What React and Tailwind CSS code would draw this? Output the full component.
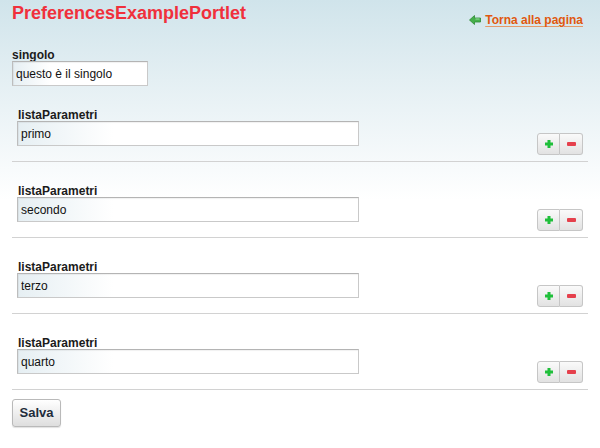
import React from 'react';

const rows = ['primo', 'secondo', 'terzo', 'quarto'];

const PlusIcon = () => (
  <svg width="8" height="8" viewBox="0 0 8 8">
    <path d="M2.5 0h3v2.5H8v3H5.5V8h-3V5.5H0v-3h2.5z" fill="#1fbf3a" />
  </svg>
);

const MinusIcon = () => (
  <svg width="9" height="4" viewBox="0 0 9 4">
    <rect x="0" y="0" width="9" height="4" rx="1" fill="#e5404c" />
  </svg>
);

const BackArrow = () => (
  <svg width="12" height="10" viewBox="0 0 12 10" className="mr-[4px]">
    <path d="M0.5 5L5.5 0.5V3H11.5V7H5.5V9.5Z" fill="#45b04a" stroke="#2f8a35" strokeWidth="0.8" strokeLinejoin="round" />
    <path d="M6.5 4H10.5" stroke="#9be0a0" strokeWidth="1" />
  </svg>
);

const inputCls =
  'h-[25px] border border-[#c9c9c9] border-t-[#b4b4b4] border-l-[#bdbdbd] bg-[linear-gradient(to_right,#e6eff3,#ffffff_28%)] pl-[3px] text-[12px] text-[#111] outline-none shadow-[inset_1px_1px_1px_rgba(0,0,0,0.06)]';

const SmallButton = ({ children, side }) => (
  <button
    className={`flex h-[22px] w-[23px] items-center justify-center border border-[#c6c6c6] bg-[linear-gradient(to_bottom,#fafafa,#e2e2e2)] ${
      side === 'left' ? 'rounded-l-[3px]' : 'rounded-r-[3px] border-l-0'
    }`}
  >
    {children}
  </button>
);

const ParamRow = ({ value }) => (
  <div className="flex items-end justify-between border-b border-[#d2d2d2] pl-[5px] pr-[5px] pb-[6px]">
    <div className="flex flex-col pt-[23px] mb-[9px]">
      <label className="h-[12px] pl-[1px] text-[12px] leading-[12px] font-bold text-[#1b1b1b]">listaParametri</label>
      <input className={`${inputCls} w-[342px]`} defaultValue={value} readOnly />
    </div>
    <div className="flex">
      <SmallButton side="left">
        <PlusIcon />
      </SmallButton>
      <SmallButton side="right">
        <MinusIcon />
      </SmallButton>
    </div>
  </div>
);

export default function App() {
  return (
    <div
      className="w-[600px] h-[448px] overflow-hidden bg-[linear-gradient(to_bottom,#d0e4eb_0px,#e4eff3_80px,#ffffff_200px)] px-[12px]"
      style={{ fontFamily: '"Liberation Sans", Arial, sans-serif' }}
    >
      {/* Header */}
      <div className="flex items-start justify-between pt-[3px] pr-[5px]">
        <h1 className="text-[18px] leading-[21px] font-bold text-[#f0303c]">PreferencesExamplePortlet</h1>
        <a href="#" className="mt-[10px] flex items-center text-[12px] leading-[14px] font-bold text-[#e0580f] underline decoration-[#e59a6a] underline-offset-[2px]">
          <BackArrow />
          Torna alla pagina
        </a>
      </div>

      {/* singolo */}
      <div className="mt-[22px] flex flex-col">
        <label className="h-[12px] text-[12px] leading-[12px] font-bold text-[#1b1b1b]">singolo</label>
        <input className={`${inputCls} w-[136px]`} defaultValue="questo è il singolo" readOnly />
      </div>

      {rows.map((r) => (
        <ParamRow key={r} value={r} />
      ))}

      <button className="mt-[9px] h-[28px] w-[49px] rounded-[3px] border border-[#b9b9b9] bg-[linear-gradient(to_bottom,#ffffff,#dedede)] text-[13px] font-bold text-[#1e2b3b] shadow-[0_1px_1px_rgba(0,0,0,0.12)]">
        Salva
      </button>
    </div>
  );
}
